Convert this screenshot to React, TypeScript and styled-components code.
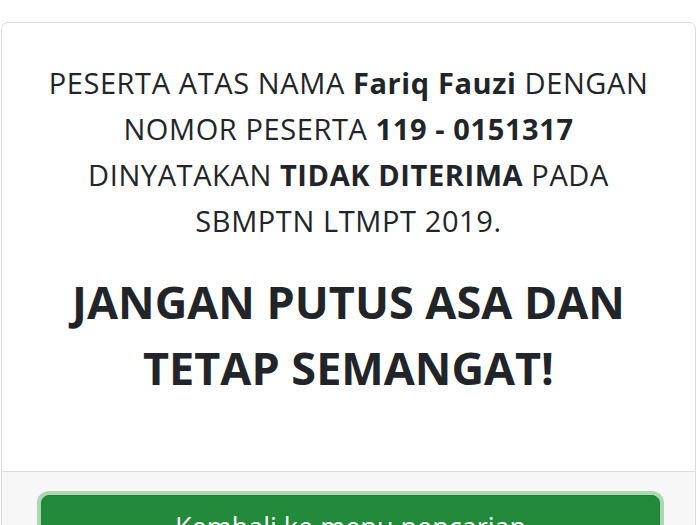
import styled, { createGlobalStyle } from "styled-components";

const GlobalStyle = createGlobalStyle`
  html, body {
    margin: 0;
    padding: 0;
    background: #ffffff;
  }
  body {
    font-family: "Open Sans", "Noto Sans", sans-serif;
    color: #212529;
    overflow: hidden;
  }
`;

export default function App() {
  return (
    <>
      <GlobalStyle />
      <Page>
        <Card>
          <CardBody>
            <Message>
              PESERTA ATAS NAMA <strong>Fariq Fauzi</strong> DENGAN NOMOR PESERTA{" "}
              <strong>119 - 0151317</strong> DINYATAKAN{" "}
              <strong>TIDAK DITERIMA</strong> PADA SBMPTN LTMPT 2019.
            </Message>
            <Headline>JANGAN PUTUS ASA DAN TETAP SEMANGAT!</Headline>
          </CardBody>
          <CardFooter>
            <BackButton type="button">Kembali ke menu pencarian</BackButton>
          </CardFooter>
        </Card>
      </Page>
    </>
  );
}

const Page = styled.div`
  padding: 22px 4px 0 1px;
`;

const Card = styled.div`
  border: 1px solid #dcdcdc;
  border-radius: 7px;
  background: #ffffff;
  overflow: hidden;
`;

const CardBody = styled.div`
  padding: 37px 44px 70px;
  text-align: center;
`;

const Message = styled.p`
  margin: 0;
  font-size: 29px;
  line-height: 46px;
  font-weight: 400;
  letter-spacing: 0.6px;

  strong {
    font-weight: 700;
  }
`;

const Headline = styled.h2`
  margin: 25px 0 0;
  font-size: 45px;
  line-height: 66px;
  font-weight: 700;
`;

const CardFooter = styled.div`
  border-top: 1px solid #dddddd;
  background: #f7f7f7;
  padding: 23px 35px 40px 39px;
`;

const BackButton = styled.button`
  display: block;
  width: 100%;
  border: 1px solid #1f7f35;
  border-radius: 8px;
  background: #228a3a;
  color: #ffffff;
  font-family: "Open Sans", "Noto Sans", sans-serif;
  font-size: 27px;
  padding: 12px 20px 12px;
  box-shadow: 0 0 0 4px #a8d9b1;
  cursor: pointer;
`;
